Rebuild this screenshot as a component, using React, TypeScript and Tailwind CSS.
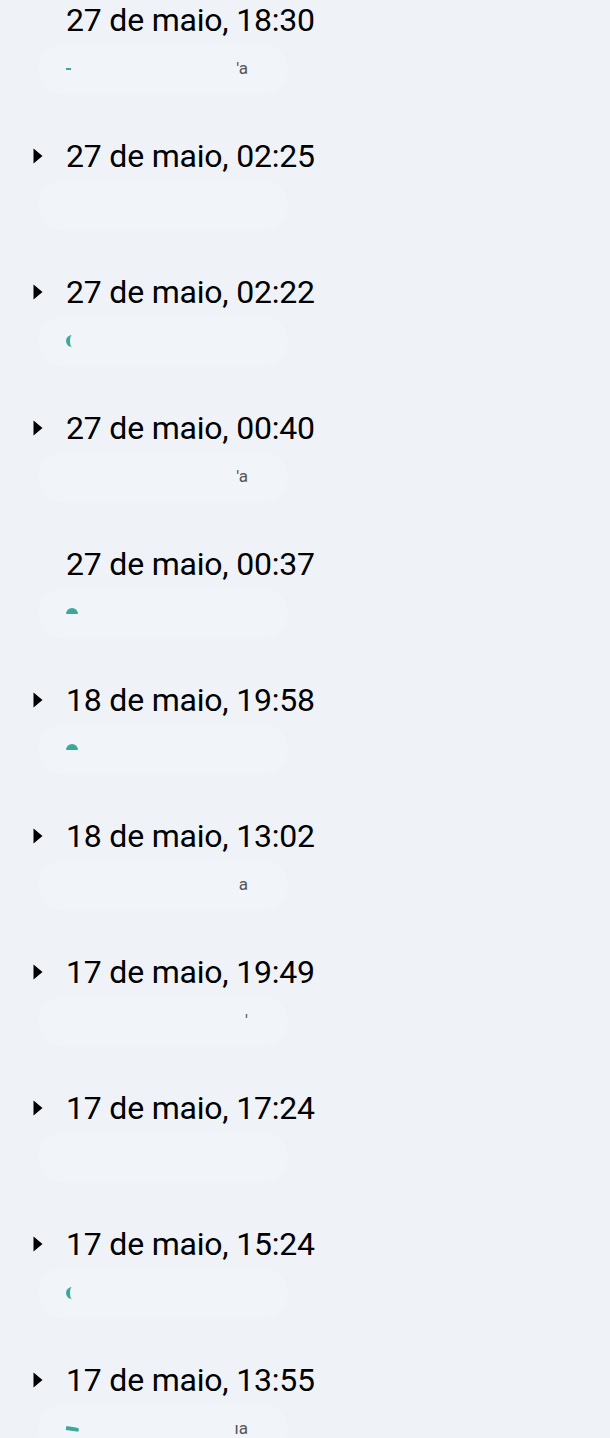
import { useState } from "react";

type Version = {
  label: string;
  expandable: boolean;
  dot: "none" | "half" | "moon" | "flag" | "tick";
  tail: string;
};

const versions: Version[] = [
  { label: "27 de maio, 18:30", expandable: false, dot: "tick", tail: "'a" },
  { label: "27 de maio, 02:25", expandable: true, dot: "none", tail: "" },
  { label: "27 de maio, 02:22", expandable: true, dot: "moon", tail: "" },
  { label: "27 de maio, 00:40", expandable: true, dot: "none", tail: "'a" },
  { label: "27 de maio, 00:37", expandable: false, dot: "half", tail: "" },
  { label: "18 de maio, 19:58", expandable: true, dot: "half", tail: "" },
  { label: "18 de maio, 13:02", expandable: true, dot: "none", tail: "a" },
  { label: "17 de maio, 19:49", expandable: true, dot: "none", tail: "'" },
  { label: "17 de maio, 17:24", expandable: true, dot: "none", tail: "" },
  { label: "17 de maio, 15:24", expandable: true, dot: "moon", tail: "" },
  { label: "17 de maio, 13:55", expandable: true, dot: "flag", tail: "ıa" },
];

function Caret() {
  return (
    <svg width="10" height="18" viewBox="0 0 10 18" className="shrink-0">
      <path d="M0.5 1.5 L9.5 9 L0.5 16.5 Z" fill="#000" />
    </svg>
  );
}

function Dot({ kind }: { kind: Version["dot"] }) {
  if (kind === "none") return <span className="w-3" />;
  if (kind === "half")
    return <span className="w-3 h-[6px] mt-[-4px] rounded-t-full bg-[#3aa99a]" />;
  if (kind === "moon")
    return (
      <span className="w-3 h-3 rounded-full border-l-[4px] border-[#3aa99a] border-y-0 border-r-0" />
    );
  if (kind === "flag")
    return <span className="w-[13px] h-[4px] rounded-r-full bg-[#3aa99a] rotate-[8deg]" />;
  return <span className="w-[5px] h-[2px] bg-[#3aa99a]" />;
}

function Row({ v }: { v: Version }) {
  const [open, setOpen] = useState(false);
  return (
    <li className="h-[136px] flex flex-col">
      <button
        onClick={() => setOpen(!open)}
        className="h-10 flex items-center text-left"
      >
        <span className="w-[66px] flex justify-start pl-[33px]">
          {v.expandable ? <Caret /> : null}
        </span>
        <span className="text-[32px] tracking-[-0.2px] text-black">{v.label}</span>
      </button>
      <div className="ml-[38px] mt-[4px] w-[250px] h-[50px] rounded-full bg-[#f1f4f9] flex items-center pl-[28px] pr-[40px] gap-2">
        <Dot kind={v.dot} />
        <span className="flex-1" />
        <span className="text-[17px] text-[#555]">{v.tail}</span>
      </div>
    </li>
  );
}

export default function App() {
  return (
    <main
      className="w-[610px] h-[1438px] overflow-hidden bg-[#eff3f8]"
      style={{ fontFamily: "Roboto, 'Noto Sans', sans-serif" }}
    >
      <ul className="flex flex-col">
        {versions.map((v) => (
          <Row key={v.label} v={v} />
        ))}
      </ul>
    </main>
  );
}
